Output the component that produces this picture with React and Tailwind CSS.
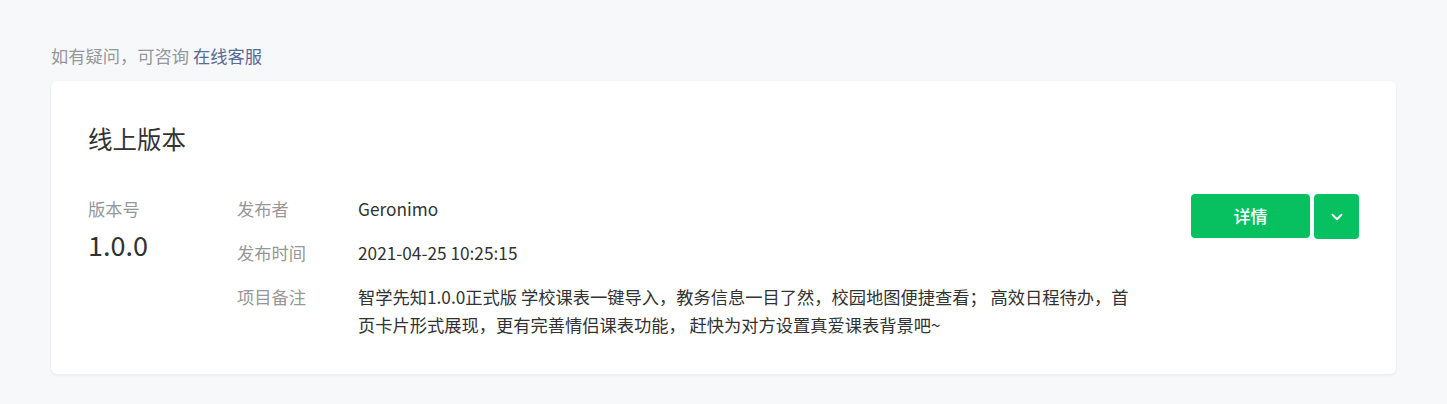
import React from 'react';
import { ChevronDown } from 'lucide-react';

const font = { fontFamily: '"Noto Sans CJK SC", "Noto Sans", sans-serif' };

const rows = [
  { label: '发布者', value: 'Geronimo' },
  { label: '发布时间', value: '2021-04-25 10:25:15' },
  {
    label: '项目备注',
    value:
      '智学先知1.0.0正式版 学校课表一键导入，教务信息一目了然，校园地图便捷查看； 高效日程待办，首页卡片形式展现，更有完善情侣课表功能， 赶快为对方设置真爱课表背景吧~',
  },
];

const App = () => {
  return (
    <div className="min-h-[404px] bg-[#f7f8fa] px-[51px] pt-[44px]" style={font}>
      {/* 顶部提示 */}
      <p className="text-[17.25px] leading-[24px] text-[#969799]">
        如有疑问，可咨询 <a className="text-[#576b95]">在线客服</a>
      </p>

      {/* 版本卡片 */}
      <div className="mt-[13px] rounded-md bg-white px-[37px] pt-[42px] pb-[35px] shadow-[0_1px_3px_rgba(0,0,0,0.08)]">
        <h2 className="text-[24.5px] leading-[32px] text-[#323233]">线上版本</h2>

        <div className="mt-[40px] flex items-start">
          <div className="w-[149px] shrink-0">
            <div className="text-[17.25px] leading-[28px] text-[#969799]">版本号</div>
            <div className="mt-[2px] text-[27px] leading-[40px] text-[#323233]">1.0.0</div>
          </div>

          <div className="flex flex-1 flex-col gap-[16px]">
            {rows.map((row) => (
              <div key={row.label} className="flex text-[17.25px] leading-[28px]">
                <div className="w-[121px] shrink-0 text-[#969799]">{row.label}</div>
                <div className="w-[780px] text-[#323233]">{row.value}</div>
              </div>
            ))}
          </div>

          <div className="-mt-[1px] flex shrink-0 gap-[4px]">
            <button className="h-[44px] w-[119px] rounded-[4px] bg-[#07c160] text-[17px] font-medium text-white">
              详情
            </button>
            <button className="flex h-[45px] w-[45px] items-center justify-center rounded-[4px] bg-[#07c160] text-white">
              <ChevronDown size={18} strokeWidth={2.5} />
            </button>
          </div>
        </div>
      </div>
    </div>
  );
};

export default App;
